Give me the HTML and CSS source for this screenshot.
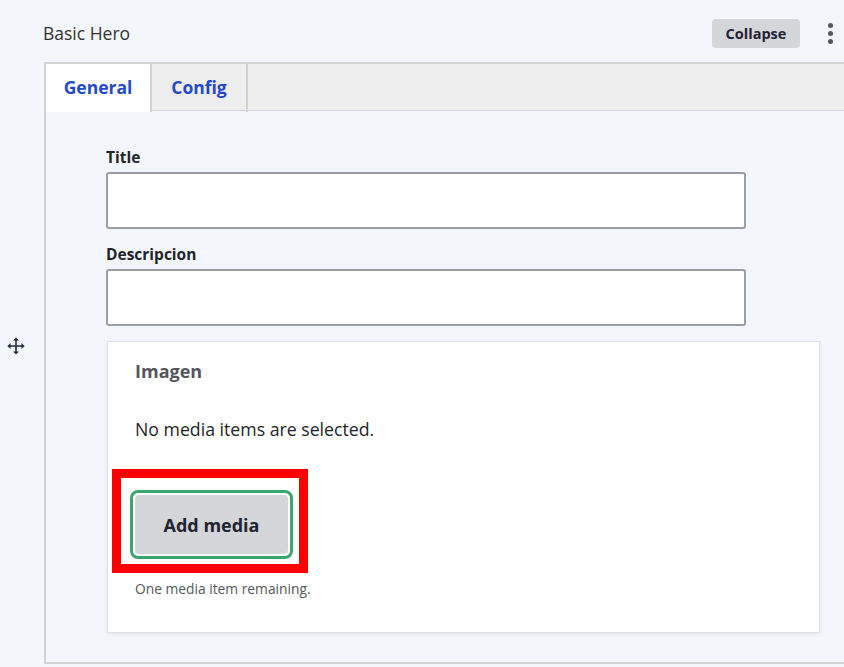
FILE: index.html
```html
<!DOCTYPE html>
<html lang="en">
<head>
<meta charset="utf-8">
<title>Basic Hero</title>
<link rel="stylesheet" href="styles.css">
</head>
<body>
  <header class="header">
    <span class="block-title">Basic Hero</span>
    <div class="header-actions">
      <button class="btn-collapse" type="button">Collapse</button>
      <span class="kebab"><i></i><i></i><i></i></span>
    </div>
  </header>
  <div class="row">
    <div class="handle">
      <svg width="18" height="18" viewBox="0 0 18 18" aria-hidden="true">
        <g fill="none" stroke="#1d2740" stroke-width="1.6">
          <path d="M9 2v14M2 9h14"/>
        </g>
        <g fill="#1d2740">
          <path d="M9 0.5l3 3H6z"/>
          <path d="M9 17.5l3-3H6z"/>
          <path d="M0.5 9l3-3v6z"/>
          <path d="M17.5 9l-3-3v6z"/>
        </g>
      </svg>
    </div>
    <section class="panel">
      <nav class="tabs">
        <a class="tab tab-active">General</a>
        <a class="tab">Config</a>
      </nav>
      <div class="content">
        <label class="label">Title</label>
        <input class="text-input" type="text">
        <label class="label label-gap">Descripcion</label>
        <input class="text-input" type="text">
        <div class="fieldset">
          <div class="legend">Imagen</div>
          <p class="empty">No media items are selected.</p>
          <div class="highlight">
            <div class="focus-ring">
              <button class="btn-add" type="button">Add media</button>
            </div>
          </div>
          <p class="remaining">One media item remaining.</p>
        </div>
      </div>
    </section>
  </div>
</body>
</html>
```

FILE: styles.css
```css
* { box-sizing: border-box; }
html, body { margin: 0; padding: 0; }
body {
  background: #f3f6fc;
  font-family: "Open Sans", "Noto Sans", sans-serif;
  color: #232429;
  width: 844px;
  height: 667px;
  overflow: hidden;
}
.header {
  height: 62px;
  display: flex;
  align-items: center;
  padding-left: 43px;
  padding-right: 11px;
}
.block-title {
  font-size: 17.5px;
  color: #333;
  flex: 1;
  margin-top: 4px;
}
.header-actions {
  display: flex;
  align-items: center;
  gap: 28px;
  margin-top: 4px;
}
.btn-collapse {
  width: 88px;
  height: 29px;
  border: 0;
  border-radius: 4px;
  background: #d5d6da;
  font-family: inherit;
  font-weight: 700;
  font-size: 14.5px;
  color: #222330;
  padding: 0;
}
.kebab {
  display: flex;
  flex-direction: column;
  gap: 3px;
  width: 5px;
}
.kebab i {
  display: block;
  width: 5px;
  height: 5px;
  border-radius: 50%;
  background: #55565b;
}
.row {
  display: flex;
}
.handle {
  width: 44px;
  padding-left: 7px;
  padding-top: 275px;
}
.handle svg { display: block; }
.panel {
  flex: 1;
  border-left: 2px solid #d2d3d6;
  border-bottom: 2px solid #d2d3d6;
  height: 602px;
}
.tabs {
  display: flex;
  height: 49px;
  background: #eeeeee;
  border-top: 2px solid #d3d3d3;
  border-bottom: 1px solid #d3d3d3;
}
.tab {
  display: flex;
  align-items: center;
  justify-content: center;
  font-weight: 700;
  font-size: 17.5px;
  color: #2449c9;
  border-right: 2px solid #d3d3d3;
  height: 48px;
  padding-bottom: 2px;
}
.tab-active {
  width: 106px;
  background: #fff;
  height: 48px;
  border-right: 2px solid #d3d3d3;
}
.tab:nth-child(2) { width: 96px; }
.content {
  padding: 36px 24px 0 60px;
}
.label {
  display: block;
  font-size: 15.5px;
  font-weight: 700;
  line-height: 20px;
  color: #232429;
  margin-bottom: 5px;
}
.label-gap { margin-top: 15px; }
.text-input {
  display: block;
  width: 640px;
  height: 57px;
  border: 2px solid #9c9ca3;
  border-radius: 3px;
  background: #fff;
}
.fieldset {
  margin-top: 15px;
  margin-left: 1px;
  width: 713px;
  height: 292px;
  background: #fff;
  border: 1px solid #e1e2e6;
  box-shadow: 0 1px 3px rgba(0,0,0,0.08);
  padding: 17px 0 0 4px;
}
.legend {
  font-size: 18px;
  font-weight: 700;
  color: #55565b;
  line-height: 24px;
  padding-left: 23px;
}
.empty {
  margin: 34px 0 0;
  font-size: 17.7px;
  line-height: 24px;
  padding-left: 23px;
  color: #232429;
}
.highlight {
  margin-top: 28px;
  width: 196px;
  height: 104px;
  border: 9px solid #ff0000;
  background: #fff;
  padding: 12px 0 0 9px;
}
.focus-ring {
  width: 163px;
  height: 69px;
  border: 3px solid #3aa76d;
  border-radius: 8px;
  padding: 2px;
  background: #fff;
}
.btn-add {
  display: block;
  width: 100%;
  height: 100%;
  border: 0;
  border-radius: 4px;
  background: #d5d6da;
  font-family: inherit;
  font-size: 18px;
  font-weight: 700;
  color: #222330;
  padding: 0;
}
.remaining {
  margin: 8px 0 0;
  padding-left: 23px;
  font-size: 13.8px;
  line-height: 16px;
  color: #55565b;
}
```
